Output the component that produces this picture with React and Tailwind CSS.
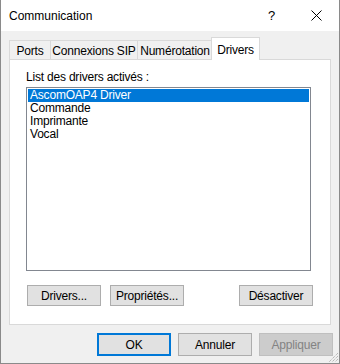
export default function App() {
  const tabs = [
    { label: 'Ports', w: 'w-[42px]' },
    { label: 'Connexions SIP', w: 'w-[88px]' },
    { label: 'Numérotation', w: 'w-[76px]' },
  ]
  const drivers = ['AscomOAP4 Driver', 'Commande', 'Imprimante', 'Vocal']

  return (
    <div className="relative flex h-[364px] w-[340px] flex-col border-x border-b border-[#8a8a8a] bg-[#f0f0f0] font-['Liberation_Sans',Arial,sans-serif] text-[12px] tracking-[-0.2px] text-black">
      {/* title bar */}
      <div className="flex h-[31px] shrink-0 items-center bg-white">
        <span className="flex-1 pl-[8px] text-[12px] tracking-normal">Communication</span>
        <span className="flex h-full w-[45px] items-center justify-center text-[13px]">?</span>
        <span className="flex h-full w-[45px] items-center justify-center">
          <svg width="11" height="11" viewBox="0 0 11 11">
            <path d="M0.5 0.5 L10.5 10.5 M10.5 0.5 L0.5 10.5" stroke="#000" strokeWidth="1" />
          </svg>
        </span>
      </div>

      <div className="px-[8px] pt-[6px]">
        {/* tabs */}
        <div className="flex h-[22px] items-end">
          {tabs.map((t, i) => (
            <div
              key={t.label}
              className={`${t.w} ${i > 0 ? '-ml-px' : ''} flex h-[19px] items-center justify-center whitespace-nowrap border-x border-t border-[#d9d9d9] bg-[#f0f0f0] pt-px`}
            >
              {t.label}
            </div>
          ))}
          <div className="relative z-10 -mb-px -ml-[2px] flex h-[23px] w-[49px] items-start justify-center whitespace-nowrap border-x border-t border-[#d9d9d9] bg-white pt-[3px]">
            Drivers
          </div>
        </div>

        {/* panel */}
        <div className="flex h-[266px] flex-col border border-[#d9d9d9] bg-white pl-[16px]">
          <div className="mt-[8px] h-[18px] leading-[18px]">List des drivers activés :</div>
          <div className="mt-[1px] h-[184px] w-[285px] border border-[#828790] bg-white p-px">
            {drivers.map((d, i) => (
              <div
                key={d}
                className={`h-[13px] pl-[2px] leading-[13px] ${i === 0 ? 'bg-[#0078d7] text-white' : ''}`}
              >
                {d}
              </div>
            ))}
          </div>
          <div className="ml-px mt-[14px] flex w-[286px]">
            <button className="h-[21px] w-[74px] border border-[#adadad] bg-[#e1e1e1]">Drivers...</button>
            <button className="ml-[9px] h-[21px] w-[74px] border border-[#adadad] bg-[#e1e1e1]">Propriétés...</button>
            <button className="ml-auto h-[21px] w-[74px] border border-[#adadad] bg-[#e1e1e1]">Désactiver</button>
          </div>
        </div>
      </div>

      {/* bottom buttons */}
      <div className="mt-[8px] flex justify-end gap-[7px] pr-[6px]">
        <button className="h-[23px] w-[74px] border-2 border-[#0078d7] bg-[#e1e1e1]">OK</button>
        <button className="h-[23px] w-[74px] border border-[#adadad] bg-[#e1e1e1]">Annuler</button>
        <button className="h-[23px] w-[74px] border border-[#bfbfbf] bg-[#cccccc] text-[#838383]">Appliquer</button>
      </div>

      {/* size grip */}
      <svg className="absolute bottom-0 right-0" width="12" height="12" viewBox="0 0 12 12">
        <path d="M11 2 L2 11 M11 5 L5 11 M11 8 L8 11" stroke="#a0a0a0" strokeWidth="1" strokeDasharray="1 1" />
      </svg>
    </div>
  )
}
